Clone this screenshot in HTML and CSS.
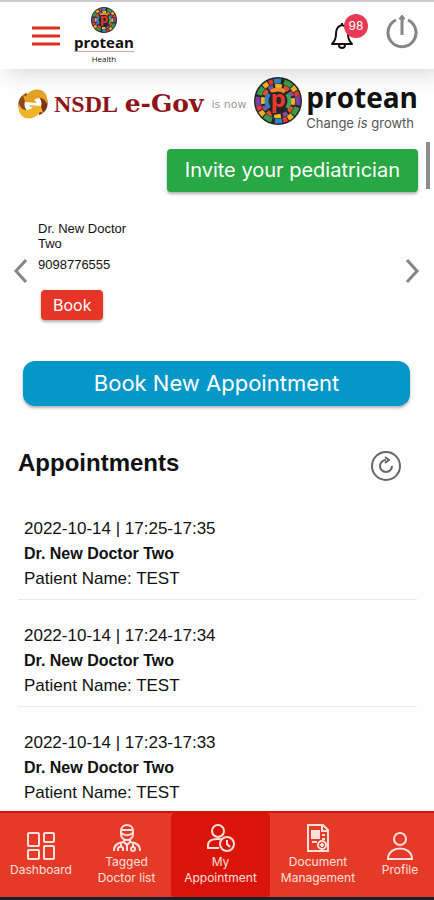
FILE: index.html
```html
<!DOCTYPE html>
<html lang="en">
<head>
    <meta charset="UTF-8">
    <meta name="viewport" content="width=device-width, initial-scale=1.0">
    <title>Protean Health - My Appointment</title>
    <link rel="stylesheet" href="styles.css">
</head>
<body>
    <!-- shared round logo -->
    <svg class="sprite" aria-hidden="true">
        <symbol id="mandala" viewBox="0 0 48 48">
            <circle cx="24" cy="24" r="24" fill="#26262a"/>
            <g fill="none" stroke-width="5">
                <circle cx="24" cy="24" r="20" stroke="#7b3fa0" pathLength="120" stroke-dasharray="9 51" stroke-dashoffset="5"/>
                <circle cx="24" cy="24" r="20" stroke="#3a9b4b" pathLength="120" stroke-dasharray="8 22" stroke-dashoffset="-6"/>
                <circle cx="24" cy="24" r="20" stroke="#f0b022" pathLength="120" stroke-dasharray="5 25" stroke-dashoffset="-15"/>
                <circle cx="24" cy="24" r="20" stroke="#2f86c4" pathLength="120" stroke-dasharray="7 53" stroke-dashoffset="-26"/>
                <circle cx="24" cy="24" r="20" stroke="#e23c2e" pathLength="120" stroke-dasharray="4 26" stroke-dashoffset="-21"/>
            </g>
            <g fill="none" stroke-width="4">
                <circle cx="24" cy="24" r="15" stroke="#f2b822" pathLength="96" stroke-dasharray="7 17" stroke-dashoffset="3"/>
                <circle cx="24" cy="24" r="15" stroke="#e3502c" pathLength="96" stroke-dasharray="6 18" stroke-dashoffset="-6"/>
                <circle cx="24" cy="24" r="15" stroke="#8650a5" pathLength="96" stroke-dasharray="5 19" stroke-dashoffset="-14"/>
                <path d="M17 15a11 11 0 0 1 14 0" stroke="#ed8b2b"/>
                <path d="M33 17a11 11 0 0 1 0 14" stroke="#43a05a"/>
                <path d="M15 31a11 11 0 0 1 0-14" stroke="#3383bd"/>
            </g>
        </symbol>
    </svg>

    <header class="topbar">
        <button class="icon-btn menu-btn" aria-label="Menu">
            <svg width="28" height="20" viewBox="0 0 28 20" stroke="#e02d22" stroke-width="3">
                <path d="M0 2h28M0 10h28M0 18h28"/>
            </svg>
        </button>
        <a class="logo" href="#">
            <svg width="26" height="26" viewBox="0 0 48 48">
                <use href="#mandala"/>
                <text x="24" y="30" class="mandala-letter">p</text>
            </svg>
            <span class="logo-name">protean</span>
            <span class="logo-sub">Health</span>
        </a>
        <div class="topbar-actions">
            <button class="icon-btn bell" aria-label="Notifications">
                <svg width="24" height="28" viewBox="0 0 24 28" fill="none" stroke="#111" stroke-width="2" stroke-linejoin="round">
                    <path d="M12 3c-5 1-6 5-6 9 0 5-1 7-4 10h20c-3-3-4-5-4-10 0-4-1-8-6-9z"/>
                    <path d="M9 23c0 4 6 4 6 0M12 1v2"/>
                </svg>
                <span class="badge">98</span>
            </button>
            <button class="icon-btn" aria-label="Log out">
                <svg width="32" height="36" viewBox="0 0 32 36" fill="none" stroke="#858585" stroke-width="3">
                    <path d="M10 6a14 14 0 1 0 12 0"/>
                    <path d="M16 4v17"/>
                    <path d="M13 5l3-4 3 4z" fill="#858585" stroke-width="1"/>
                </svg>
            </button>
        </div>
    </header>

    <main class="content">
        <div class="banner">
            <svg width="30" height="30" viewBox="0 0 30 30">
                <path d="M9 4C2 6-1 13 1 20c1 4 3 6 6 8l4-5c-5-3-6-9-2-14z" fill="#8a4a1c"/>
                <path d="M21 26c7-2 10-9 8-16-1-4-3-6-6-8l-4 5c5 3 6 9 2 14z" fill="#7a3219"/>
                <path d="M7 13L5 6l3 1c4-7 14-9 19-3 2 3 3 7 2 11-2-6-8-8-13-4l3 3z" fill="#e3a024"/>
                <path d="M23 17l2 7-3-1c-4 7-14 9-19 3-2-3-3-7-2-11 2 6 8 8 13 4l-3-3z" fill="#efb42a"/>
            </svg>
            <span class="nsdl">NSDL <span class="egov">e-Gov</span></span>
            <span class="is-now">is now</span>
            <div class="protean">
                <svg width="48" height="48" viewBox="0 0 48 48">
                    <use href="#mandala"/>
                    <text x="24" y="30" class="mandala-letter">p</text>
                </svg>
                <div class="protean-text">
                    <span class="protean-name">protean</span>
                    <span class="protean-tag">Change <i>is</i> growth</span>
                </div>
            </div>
        </div>

        <button class="btn btn-invite">Invite your pediatrician</button>

        <section class="carousel">
            <button class="icon-btn" aria-label="Previous">
                <svg width="16" height="26" viewBox="0 0 16 26" fill="none" stroke="#858585" stroke-width="3"><path d="M13 2L3 13l10 11"/></svg>
            </button>
            <div class="doctor">
                <p class="doctor-name">Dr. New Doctor Two</p>
                <p class="doctor-phone">9098776555</p>
                <button class="btn btn-book">Book</button>
            </div>
            <button class="icon-btn" aria-label="Next">
                <svg width="16" height="26" viewBox="0 0 16 26" fill="none" stroke="#858585" stroke-width="3"><path d="M3 2l10 11L3 24"/></svg>
            </button>
        </section>

        <button class="btn btn-new">Book New Appointment</button>

        <section class="appointments">
            <div class="appointments-head">
                <h1>Appointments</h1>
                <button class="icon-btn" aria-label="Refresh">
                    <svg width="30" height="30" viewBox="0 0 30 30" fill="none" stroke="#666" stroke-width="2">
                        <circle cx="15" cy="15" r="14"/>
                        <path d="M15 9a6 6 0 1 0 6 6M14 6l4 3-4 3"/>
                    </svg>
                </button>
            </div>
            <ul class="list">
                <li>
                    <p>2022-10-14 | 17:25-17:35</p>
                    <p class="list-doctor">Dr. New Doctor Two</p>
                    <p>Patient Name: TEST</p>
                </li>
                <li>
                    <p>2022-10-14 | 17:24-17:34</p>
                    <p class="list-doctor">Dr. New Doctor Two</p>
                    <p>Patient Name: TEST</p>
                </li>
                <li>
                    <p>2022-10-14 | 17:23-17:33</p>
                    <p class="list-doctor">Dr. New Doctor Two</p>
                    <p>Patient Name: TEST</p>
                </li>
            </ul>
        </section>
        <div class="scroll-thumb"></div>
    </main>

    <nav class="tabs">
        <a href="#" class="tab">
            <svg width="28" height="28" viewBox="0 0 28 28">
                <rect x="1" y="1" width="11" height="13" rx="1"/><rect x="17" y="1" width="10" height="9" rx="1"/>
                <rect x="1" y="18" width="11" height="9" rx="1"/><rect x="17" y="14" width="10" height="13" rx="1"/>
            </svg>
            <span>Dashboard</span>
        </a>
        <a href="#" class="tab">
            <svg width="28" height="28" viewBox="0 0 28 28">
                <path d="M8 7c0-8 12-8 12 0v3c0 8-12 8-12 0zM8 6h12M8 9c4 3 8 3 12 0M11 15v3l3 3 3-3v-3"/>
                <path d="M1 27c0-6 3-8 10-9M27 27c0-6-3-8-10-9M8 19v4M5 27v-2c0-3 5-3 5 0v2M20 19v4M14 21v6"/>
                <circle cx="20" cy="25" r="2"/>
            </svg>
            <span>Tagged Doctor list</span>
        </a>
        <a href="#" class="tab active">
            <svg width="28" height="28" viewBox="0 0 28 28">
                <circle cx="11" cy="7" r="6"/>
                <path d="M12 24H1v-3c0-4 4-6 10-6 2 0 3 0 4 1"/>
                <circle cx="20" cy="20" r="7"/><path d="M20 16v4l3 3"/>
            </svg>
            <span>My Appointment</span>
        </a>
        <a href="#" class="tab">
            <svg width="28" height="28" viewBox="0 0 28 28">
                <path d="M4 1h15l5 5v21H4zM18 1v6h6"/>
                <path d="M8 7h7v7H8z" fill="#fde0dc"/>
                <path d="M18 11h3M18 15h3M8 18h5"/>
                <circle cx="18" cy="21" r="4"/><path d="M16 21h4M18 19v4"/>
            </svg>
            <span>Document Management</span>
        </a>
        <a href="#" class="tab">
            <svg width="28" height="28" viewBox="0 0 28 28">
                <circle cx="14" cy="7" r="6"/>
                <path d="M2 27c0-14 24-14 24 0z"/>
            </svg>
            <span>Profile</span>
        </a>
    </nav>
</body>
</html>
```
FILE: styles.css
```css
* {
    box-sizing: border-box;
}

body {
    margin: 0;
    height: 100vh;
    display: flex;
    flex-direction: column;
    font-family: "Liberation Sans", Arial, sans-serif;
    background-color: #fefefe;
    color: #111111;
}

p, h1, ul {
    margin: 0;
    padding: 0;
}

button {
    font-family: Inter, sans-serif;
    border: none;
    cursor: pointer;
}

a {
    color: inherit;
    text-decoration: none;
}

svg {
    display: block;
    flex-shrink: 0;
}

.sprite {
    position: absolute;
    width: 0;
    height: 0;
}

.mandala-letter {
    font: bold 24px "Open Sans", sans-serif;
    fill: #e8392c;
    stroke: #26262a;
    stroke-width: 3px;
    paint-order: stroke;
    text-anchor: middle;
}

.icon-btn {
    padding: 0;
    background: none;
}

/* header */
.topbar {
    display: flex;
    align-items: flex-start;
    padding: 5px 16px 4px 32px;
    border-top: 2px solid #cccccc;
    background-color: #ffffff;
    box-shadow: 8px 4px 20px rgba(0, 0, 0, 0.16);
    z-index: 1;
}

.menu-btn {
    margin-top: 19px;
}

.logo {
    display: flex;
    flex-direction: column;
    align-items: center;
    margin-left: 14px;
    font-family: "Open Sans", sans-serif;
    color: #111111;
}

.logo-name {
    font-size: 15px;
    font-weight: bold;
    line-height: 18px;
    border-bottom: 1px solid #d9a0a0;
}

.logo-sub {
    font-size: 8px;
    line-height: 13px;
}

.topbar-actions {
    display: flex;
    align-items: center;
    gap: 32px;
    margin-left: auto;
    padding-top: 7px;
}

.bell {
    position: relative;
    padding-top: 8px;
}

.badge {
    position: absolute;
    top: 0;
    left: 14px;
    width: 24px;
    border-radius: 50%;
    background-color: #e83a55;
    color: #ffffff;
    font-size: 12px;
    line-height: 24px;
}

/* main area */
.content {
    position: relative;
    flex: 1;
    min-height: 0;
    display: flex;
    flex-direction: column;
    overflow-y: auto;
    scrollbar-width: none;
}

.content > * {
    flex-shrink: 0;
}

.scroll-thumb {
    position: absolute;
    top: 73px;
    right: 4px;
    width: 4px;
    height: 47px;
    background-color: #8c8c8c;
}

.banner {
    display: flex;
    align-items: center;
    padding: 8px 16px 8px 18px;
}

.nsdl {
    margin-left: 6px;
    font-family: "Liberation Serif", serif;
    font-size: 24px;
    font-weight: bold;
    color: #8f1418;
    white-space: nowrap;
}

.egov {
    margin-left: 2px;
    font-family: "DejaVu Serif", serif;
    font-size: 25px;
    line-height: 28px;
}

.is-now {
    margin-left: 8px;
    font-family: "DejaVu Sans", sans-serif;
    font-size: 11px;
    color: #999999;
    white-space: nowrap;
}

.protean {
    display: flex;
    align-items: flex-start;
    gap: 4px;
    margin-left: auto;
    font-family: "Open Sans", sans-serif;
}

.protean-text {
    display: flex;
    flex-direction: column;
    padding-top: 3px;
    white-space: nowrap;
}

.protean-name {
    font-size: 28px;
    font-weight: bold;
    line-height: 35px;
}

.protean-tag {
    font-family: Inter, sans-serif;
    font-size: 13px;
    line-height: 16px;
    color: #555555;
}

.btn {
    color: #ffffff;
    box-shadow: 0 2px 3px rgba(0, 0, 0, 0.3);
}

.btn-invite {
    align-self: flex-end;
    margin: 10px 16px 0 0;
    padding: 0 18px;
    font-size: 20px;
    line-height: 43px;
    border-radius: 4px;
    background-color: #28a745;
}

.carousel {
    display: flex;
    align-items: center;
    margin-top: 29px;
    padding: 0 14px 0 13px;
}

.doctor {
    flex: 1;
    padding-left: 9px;
    font-size: 13px;
}

.doctor-name {
    max-width: 96px;
    line-height: 15px;
}

.doctor-phone {
    margin-top: 6px;
    line-height: 15px;
}

.btn-book {
    margin: 18px 0 0 3px;
    padding: 0 12px;
    font-size: 16px;
    line-height: 30px;
    border-radius: 4px;
    background-color: #e53526;
}

.btn-new {
    margin: 41px 24px 0 23px;
    font-size: 22px;
    line-height: 43px;
    border-radius: 12px;
    background-color: #0497c8;
}

/* appointments */
.appointments {
    padding: 45px 17px 0 18px;
}

.appointments-head {
    display: flex;
    justify-content: space-between;
    padding-right: 16px;
}

.appointments-head h1 {
    font-size: 24px;
    line-height: 24px;
}

.list {
    margin-top: 12px;
    list-style: none;
    font-size: 17px;
    line-height: 25px;
}

.list li {
    padding: 23px 6px 8px;
    border-bottom: 1px solid #e9e9e9;
}

.list-doctor {
    font-size: 16px;
    font-weight: bold;
}

/* bottom navigation */
.tabs {
    display: grid;
    grid-template-columns: 82fr 89fr 99fr 96fr 68fr;
    height: 89px;
    flex-shrink: 0;
    border-top: 2px solid #cf1414;
    border-bottom: 3px solid #16202a;
    background-color: #e53a28;
    z-index: 1;
}

.tab {
    display: flex;
    flex-direction: column;
    align-items: center;
    justify-content: center;
    gap: 2px;
    min-width: 0;
    padding: 0 4px;
    font-family: Inter, sans-serif;
    font-size: 12px;
    line-height: 16px;
    text-align: center;
    color: #fde0dc;
}

.tab svg {
    fill: none;
    stroke: #fde0dc;
    stroke-width: 2;
}

.tab.active {
    border-radius: 4px;
    background-color: #da1409;
}
```
